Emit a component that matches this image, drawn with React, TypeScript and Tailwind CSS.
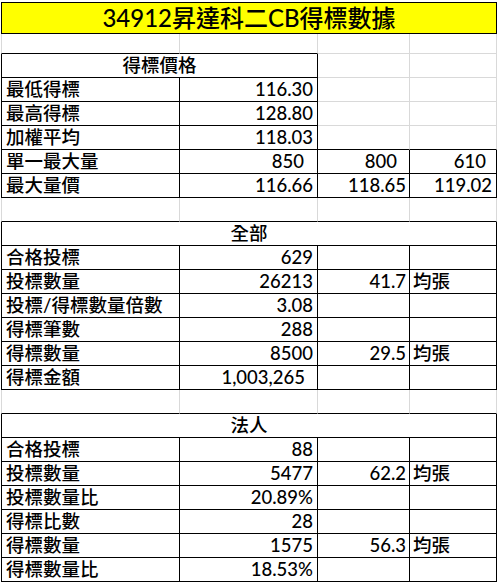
import React from 'react';
import clsx from 'clsx';

type Line = 'k' | 'g';

const R: Record<Line, string> = { k: 'border-r-black', g: 'border-r-[#d9d9d9]' };
const B: Record<Line, string> = { k: 'border-b-black', g: 'border-b-[#d9d9d9]' };
const L: Record<Line, string> = { k: 'border-l border-l-black', g: 'border-l border-l-[#d9d9d9]' };
const SPAN: Record<number, string> = { 1: '', 2: 'col-span-2', 4: 'col-span-4' };
const ALIGN = { left: 'justify-start pl-[4px]', right: 'justify-end pr-[4px]', center: 'justify-center' };

interface CellProps {
  r?: Line;
  b?: Line;
  l?: Line;
  span?: number;
  align?: 'left' | 'right' | 'center';
  className?: string;
  children?: React.ReactNode;
}

// one spreadsheet cell: draws only its own right/bottom edge (plus left for column A)
const C: React.FC<CellProps> = ({ r = 'k', b = 'k', l, span = 1, align = 'left', className, children }) => (
  <div
    className={clsx(
      'flex items-center border-r border-b whitespace-nowrap leading-none',
      R[r],
      B[b],
      l && L[l],
      SPAN[span],
      ALIGN[align],
      className
    )}
  >
    {children}
  </div>
);

const Row: React.FC<{ h?: string; children: React.ReactNode }> = ({ h = 'h-[24px]', children }) => (
  <div className={clsx('grid grid-cols-[179px_138px_92px_87px]', h)}>{children}</div>
);

// blank gridline cells for columns C and D
const Blank: React.FC<{ b?: Line }> = ({ b = 'g' }) => (
  <>
    <C r="g" b={b} />
    <C r="g" b={b} />
  </>
);

interface StatRow {
  label: string;
  value: string;
  valuePad?: string;
  avg?: string;
}

const allRows: StatRow[] = [
  { label: '合格投標', value: '629' },
  { label: '投標數量', value: '26213', avg: '41.7' },
  { label: '投標/得標數量倍數', value: '3.08' },
  { label: '得標筆數', value: '288' },
  { label: '得標數量', value: '8500', avg: '29.5' },
  { label: '得標金額', value: '1,003,265', valuePad: '!pr-[12px]' },
];

const corpRows: StatRow[] = [
  { label: '合格投標', value: '88' },
  { label: '投標數量', value: '5477', avg: '62.2' },
  { label: '投標數量比', value: '20.89%' },
  { label: '得標比數', value: '28' },
  { label: '得標數量', value: '1575', avg: '56.3' },
  { label: '得標數量比', value: '18.53%' },
];

const StatTable: React.FC<{ title: string; rows: StatRow[] }> = ({ title, rows }) => (
  <>
    <Row>
      <C l="k" span={4} align="center">
        {title}
      </C>
    </Row>
    {rows.map((row) => (
      <Row key={row.label}>
        <C l="k">{row.label}</C>
        <C align="right" className={row.valuePad}>
          {row.value}
        </C>
        <C align="right" className="!pr-[3px]">
          {row.avg}
        </C>
        <C className="!pl-[3px]">{row.avg ? '均張' : null}</C>
      </Row>
    ))}
  </>
);

export default function App() {
  return (
    <div className="w-[497px] h-[582px] overflow-hidden bg-white text-black font-['Lato','Noto_Sans_CJK_TC',sans-serif] font-medium text-[18.5px]">
      <div className="pt-[2px] pl-[1px]">
        <Row h="h-[32px]">
          <C l="k" span={4} align="center" className="border-t border-t-black bg-[#ffff00] text-[24px]">
            34912昇達科二CB得標數據
          </C>
        </Row>

        <Row h="h-[20px]">
          <C l="g" r="g" />
          <C r="g" />
          <Blank />
        </Row>

        {/* 得標價格 */}
        <Row>
          <C l="k" span={2} align="center">
            得標價格
          </C>
          <Blank />
        </Row>
        <Row>
          <C l="k">最低得標</C>
          <C align="right">116.30</C>
          <Blank />
        </Row>
        <Row>
          <C l="k">最高得標</C>
          <C align="right">128.80</C>
          <Blank />
        </Row>
        <Row>
          <C l="k">加權平均</C>
          <C align="right">118.03</C>
          <Blank b="k" />
        </Row>
        <Row>
          <C l="k">單一最大量</C>
          <C align="right" className="!pr-[13px]">
            850
          </C>
          <C align="right" className="!pr-[12px]">
            800
          </C>
          <C align="right" className="!pr-[10px]">
            610
          </C>
        </Row>
        <Row>
          <C l="k">最大量價</C>
          <C align="right">116.66</C>
          <C align="right" className="!pr-[3px]">
            118.65
          </C>
          <C align="right" className="!pr-[4px]">
            119.02
          </C>
        </Row>

        <Row>
          <C l="g" r="g" />
          <C r="g" />
          <Blank b="k" />
        </Row>

        <StatTable title="全部" rows={allRows} />

        <Row>
          <C l="g" r="g" />
          <C r="g" />
          <Blank b="k" />
        </Row>

        <StatTable title="法人" rows={corpRows} />
      </div>
    </div>
  );
}
